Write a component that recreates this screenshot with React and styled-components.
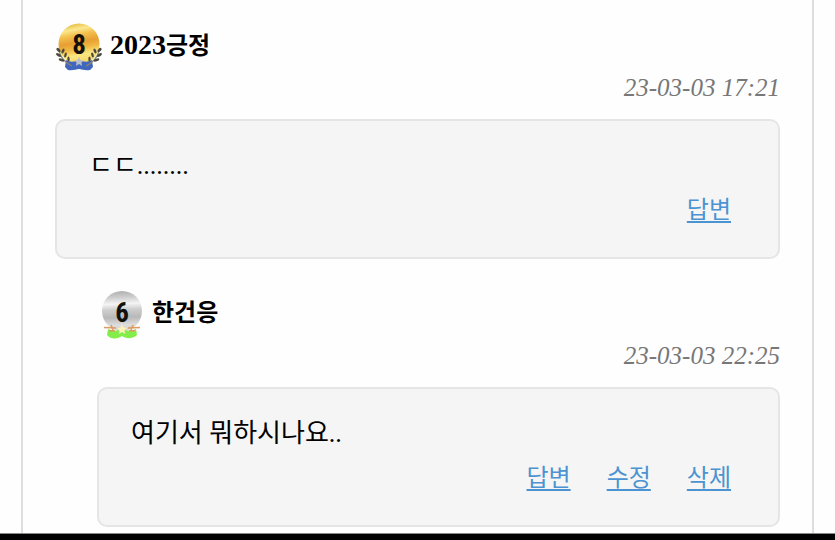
import React from 'react'
import styled, { createGlobalStyle } from 'styled-components'

const GlobalStyle = createGlobalStyle`
  * {
    box-sizing: border-box;
  }

  html {
    overflow: hidden;
  }

  body {
    margin: 0;
    background: #fefefe;
    color: #000;
    font-family: 'Liberation Serif', 'Noto Sans CJK KR', serif;
  }
`

const Board = styled.main`
  margin: 0 21px;
  padding: 23px 32px 32px;
  border: solid #dedede;
  border-width: 0 2px;
`

const CommentList = styled.ul`
  display: flex;
  flex-direction: column;
  gap: 32px;
  margin: 0;
  padding: 0;
  list-style: none;
`

const CommentItem = styled.li`
  margin-left: ${({ $depth }) => $depth * 42}px;
`

const Header = styled.header`
  display: flex;
  align-items: center;
  gap: 7px;
  height: 48px;
`

const Badge = styled.svg`
  width: 48px;
  height: 48px;
  flex: none;
`

const Name = styled.strong`
  display: flex;
  align-items: baseline;
  padding-bottom: 4px;
  font-size: 24px;
  font-weight: 700;
  line-height: 40px;
`

const Year = styled.span`
  font-size: 28px;
`

const WrittenAt = styled.time`
  display: block;
  color: #777;
  font-size: 25px;
  font-style: italic;
  line-height: 34px;
  text-align: right;
`

const Bubble = styled.div`
  margin-top: 14px;
  padding: 25px 32px 31px;
  background: #f5f5f5;
  border: 2px solid #e5e5e5;
  border-radius: 10px;
`

const Message = styled.p`
  margin: 0;
  font-size: 26px;
  line-height: 40px;
`

const Actions = styled.nav`
  display: flex;
  justify-content: flex-end;
  gap: 36px;
  margin-top: 8px;
  padding-right: 15px;
`

const Action = styled.a`
  color: #4b93d1;
  font-size: 24px;
  line-height: 32px;
  text-decoration: underline;
  text-decoration-thickness: 2px;
  text-underline-offset: 3px;
`

const BottomBar = styled.div`
  position: fixed;
  right: 0;
  bottom: 0;
  left: 0;
  height: 7px;
  background: #000;
  border-top: 1px solid #888;
`

const Level = styled.text`
  fill: #14110b;
  font-family: 'Liberation Sans Narrow', 'Roboto Condensed', Roboto, sans-serif;
  font-size: 27px;
  font-weight: 700;
  text-anchor: middle;
`

const Laurel = ({ transform }) => (
  <g transform={transform} fill="#4b4a3c">
    <path d="M4 28 C6 36 11 40 17 43" fill="none" stroke="#8a8770" strokeWidth="1.2" />
    <ellipse cx="3.5" cy="27" rx="1.5" ry="2.6" transform="rotate(-45 3.5 27)" />
    <ellipse cx="8" cy="28" rx="1.3" ry="2.6" transform="rotate(25 8 28)" />
    <ellipse cx="3.5" cy="32" rx="1.3" ry="2.8" transform="rotate(-60 3.5 32)" />
    <ellipse cx="10.5" cy="32" rx="1.2" ry="2.6" transform="rotate(15 10.5 32)" />
    <ellipse cx="6.5" cy="37" rx="1.3" ry="3" transform="rotate(-70 6.5 37)" />
    <ellipse cx="13.5" cy="36" rx="1.2" ry="2.6" transform="rotate(0 13.5 36)" />
  </g>
)

const GoldBadge = () => (
  <Badge viewBox="0 0 48 48" role="img" aria-label="레벨 8">
    <defs>
      <linearGradient id="gold" x1="0.4" y1="0" x2="0.6" y2="1">
        <stop offset="0" stopColor="#e8bd45" />
        <stop offset="0.14" stopColor="#fbe88e" />
        <stop offset="0.28" stopColor="#f3bf4c" />
        <stop offset="0.46" stopColor="#e79f33" />
        <stop offset="0.6" stopColor="#f0b840" />
        <stop offset="0.76" stopColor="#fbe680" />
        <stop offset="1" stopColor="#f3d262" />
      </linearGradient>
      <filter id="goldSoft">
        <feGaussianBlur stdDeviation="0.6" />
      </filter>
    </defs>
    <g filter="url(#goldSoft)">
      <circle cx="24" cy="21" r="20.5" fill="url(#gold)" />
      <path d="M11 37 C16 40 20 38 24 38 C28 38 32 40 37 37 L38 44 L35 47 C30 48 27 46 24 46 C21 46 18 48 13 47 L10 44 Z" fill="#4166bd" />
      <Laurel />
      <Laurel transform="translate(48 0) scale(-1 1)" />
      <path d="M24 34 L25.5 37 L28.5 37.5 L26.5 39.5 L27 43 L24 41 L21 43 L21.5 39.5 L19.5 37.5 L22.5 37 Z" fill="#b9bfca" />
    </g>
    <Level x="24" y="31">8</Level>
  </Badge>
)

const SilverBadge = () => (
  <Badge viewBox="0 0 48 48" role="img" aria-label="레벨 6">
    <defs>
      <linearGradient id="silver" x1="0.48" y1="0" x2="0.52" y2="1">
        <stop offset="0" stopColor="#b0b0b0" />
        <stop offset="0.15" stopColor="#cccccc" />
        <stop offset="0.32" stopColor="#f4f4f4" />
        <stop offset="0.46" stopColor="#cfcfcf" />
        <stop offset="0.66" stopColor="#b8b8b8" />
        <stop offset="0.85" stopColor="#dedede" />
        <stop offset="1" stopColor="#d0d0d0" />
      </linearGradient>
      <filter id="silverSoft">
        <feGaussianBlur stdDeviation="0.6" />
      </filter>
    </defs>
    <g filter="url(#silverSoft)">
      <circle cx="25" cy="20" r="20" fill="url(#silver)" />
      <path d="M11 38 C16 41 21 39 25 39 C29 39 34 41 39 38 L40 44 C36 48 29 48 25 45 C21 48 14 49 10 44 Z" fill="#83ed48" />
      <path d="M7 36.5 L19 37 M12 39.5 L18 40 M43 36.5 L31 37 M38 39.5 L32 40 M14 34 L16 39 M36 34 L34 39" fill="none" stroke="#dd9b62" strokeWidth="1.6" />
      <path d="M25 33 L26.5 36.5 L30 37 L27.5 39.5 L28 43 L25 41 L22 43 L22.5 39.5 L20 37 L23.5 36.5 Z" fill="#fff2b8" />
    </g>
    <Level x="25" y="31">6</Level>
  </Badge>
)

const comments = [
  {
    id: 1,
    depth: 0,
    badge: <GoldBadge />,
    name: <><Year>2023</Year>긍정</>,
    date: '23-03-03 17:21',
    message: 'ㄷㄷ........',
    actions: ['답변'],
  },
  {
    id: 2,
    depth: 1,
    badge: <SilverBadge />,
    name: '한건응',
    date: '23-03-03 22:25',
    message: '여기서 뭐하시나요..',
    actions: ['답변', '수정', '삭제'],
  },
]

export default function App() {
  return (
    <>
      <GlobalStyle />
      <Board>
        <CommentList>
          {comments.map(({ id, depth, badge, name, date, message, actions }) => (
            <CommentItem key={id} $depth={depth}>
              <Header>
                {badge}
                <Name>{name}</Name>
              </Header>
              <WrittenAt>{date}</WrittenAt>
              <Bubble>
                <Message>{message}</Message>
                <Actions>
                  {actions.map((label) => (
                    <Action key={label} href="#">{label}</Action>
                  ))}
                </Actions>
              </Bubble>
            </CommentItem>
          ))}
        </CommentList>
      </Board>
      <BottomBar />
    </>
  )
}
